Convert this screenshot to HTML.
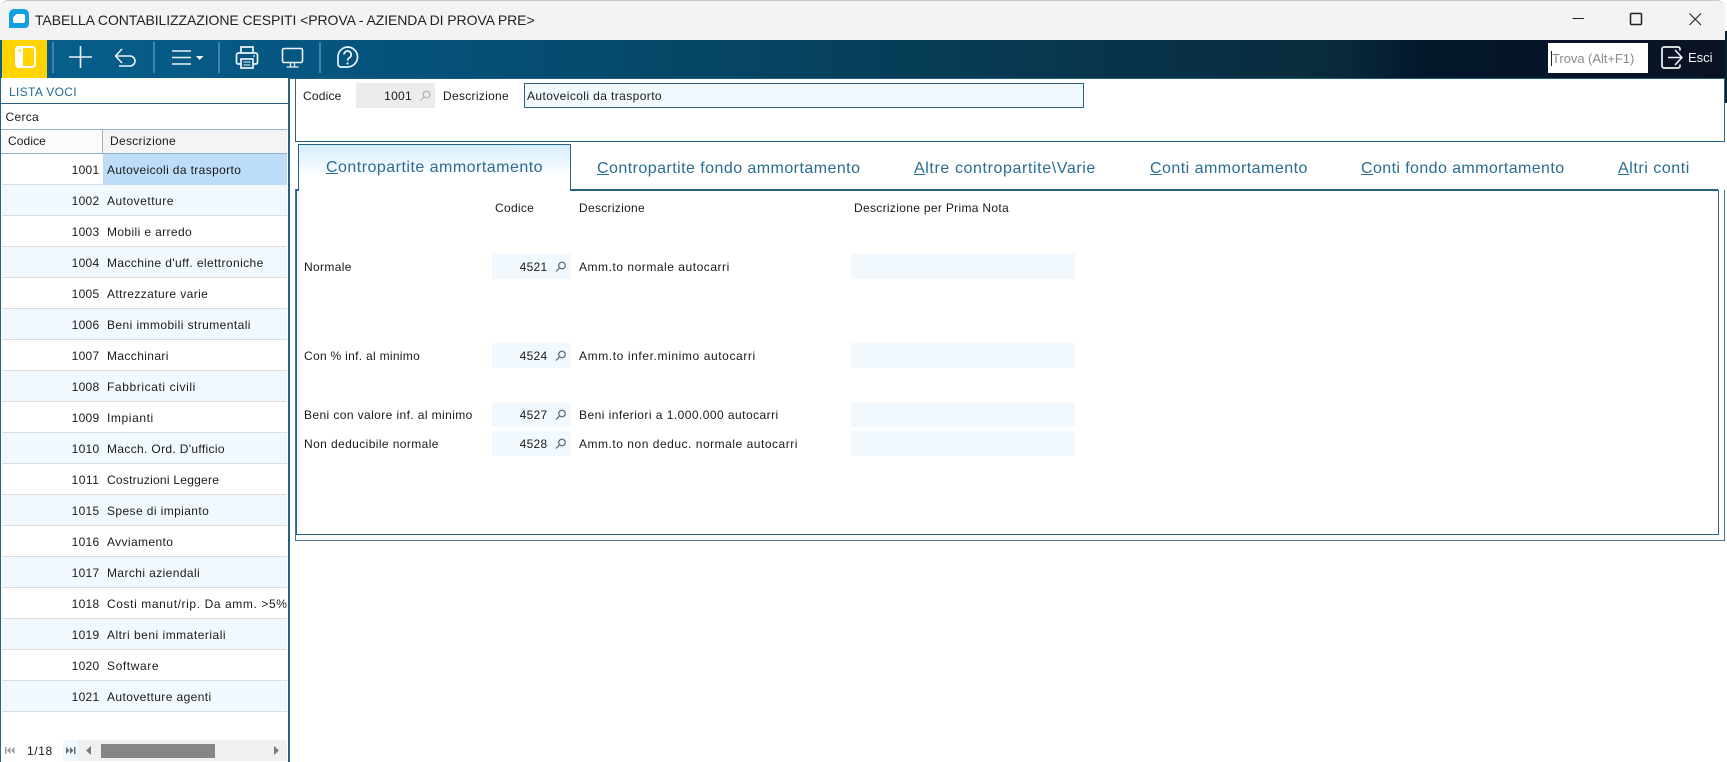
<!DOCTYPE html>
<html lang="it">
<head>
<meta charset="utf-8">
<title>TABELLA CONTABILIZZAZIONE CESPITI</title>
<style>
html,body{margin:0;padding:0;background:#fff;}
body{position:relative;width:1727px;height:762px;overflow:hidden;font-family:"Liberation Sans",sans-serif;font-size:12px;color:#1a1a1a;}
.a{position:absolute;}
.t{position:absolute;white-space:nowrap;line-height:14px;height:14px;letter-spacing:.3px;}
.r{text-align:right;}
.row{position:absolute;left:2px;width:285px;height:30px;border-bottom:1px solid #d9dfe3;}
.row.o{background:#f1f9fe;}
.row .n{position:absolute;left:0;width:97.5px;top:9px;text-align:right;line-height:14px;letter-spacing:.3px;}
.row .d{position:absolute;left:105px;top:9px;line-height:14px;letter-spacing:.4px;white-space:nowrap;}
.tab{position:absolute;white-space:nowrap;font-size:16px;line-height:20px;color:#2a6c92;height:20px;letter-spacing:.45px;}
.inp{position:absolute;background:#f1f9fe;height:25px;}
</style>
</head>
<body>
<!-- title bar -->
<div class="a" style="left:0;top:0;width:1725px;height:40px;background:#f3f3f3;border-top:1px solid #c8c8c8;border-radius:8px 8px 0 0;box-sizing:border-box;"></div>
<div class="t" style="left:35px;top:12px;font-size:14px;line-height:16px;height:16px;color:#222;letter-spacing:-.08px;">TABELLA CONTABILIZZAZIONE CESPITI &lt;PROVA - AZIENDA DI PROVA PRE&gt;</div>
<!-- toolbar -->
<div class="a" style="left:0;top:40px;width:1725px;height:38px;background:linear-gradient(90deg,#07608c 0,#05557f 340px,#063f5a 870px,#0a2a3c 1340px,#04182c 1420px,#0a1222 1725px);"></div>
<div class="a" style="left:290px;top:78px;width:1435px;height:1px;background:#1f6080;"></div>
<div class="a" style="left:2px;top:40px;width:45px;height:38px;background:#ffd400;"></div>
<div class="a" style="left:1548px;top:43px;width:100px;height:30px;background:#fff;"></div>
<div class="a" style="left:1551px;top:51px;width:1px;height:15px;background:#222;"></div>
<div class="t" style="left:1552px;top:52px;color:#8a8a8a;font-size:13px;letter-spacing:-.05px;">Trova (Alt+F1)</div>
<div class="t" style="left:1688px;top:50px;color:#f2f6f8;font-size:13px;line-height:16px;height:16px;letter-spacing:0;">Esci</div>
<!-- right edge -->
<div class="a" style="left:1725px;top:31px;width:2px;height:72px;background:#0c2233;"></div>
<!-- left panel -->
<div class="a" style="left:0;top:78px;width:1px;height:684px;background:#2a6080;"></div>
<div class="a" style="left:288px;top:78px;width:2px;height:684px;background:#2a6080;"></div>
<div class="t" style="left:9px;top:85px;color:#1f6a94;letter-spacing:.35px;">LISTA VOCI</div>
<div class="a" style="left:1px;top:103px;width:287px;height:1px;background:#2a6080;"></div>
<div class="t" style="left:5.500px;top:110px;">Cerca</div>
<div class="a" style="left:1px;top:129px;width:286px;height:25px;background:#f4f4f4;border-top:1px solid #9fb2bf;border-bottom:1px solid #8fb2cc;box-sizing:border-box;"></div>
<div class="a" style="left:1px;top:130px;width:101px;height:23px;background:#fbfbfb;"></div>
<div class="a" style="left:102px;top:130px;width:1px;height:23px;background:#9fb2bf;"></div>
<div class="t" style="left:8px;top:134px;letter-spacing:.1px;">Codice</div>
<div class="t" style="left:110px;top:134px;letter-spacing:.3px;">Descrizione</div>

<div class="row" style="top:154px;"><div class="a" style="left:101px;top:0;width:184px;height:31px;background:#bddcf8;"></div><span class="n">1001</span><span class="d" style="letter-spacing:.37px;">Autoveicoli da trasporto</span></div>
<div class="row o" style="top:185px;"><span class="n">1002</span><span class="d" style="letter-spacing:.5px;">Autovetture</span></div>
<div class="row" style="top:216px;"><span class="n">1003</span><span class="d" style="letter-spacing:.38px;">Mobili e arredo</span></div>
<div class="row o" style="top:247px;"><span class="n">1004</span><span class="d">Macchine d'uff. elettroniche</span></div>
<div class="row" style="top:278px;"><span class="n">1005</span><span class="d">Attrezzature varie</span></div>
<div class="row o" style="top:309px;"><span class="n">1006</span><span class="d" style="letter-spacing:.42px;">Beni immobili strumentali</span></div>
<div class="row" style="top:340px;"><span class="n">1007</span><span class="d" style="letter-spacing:.38px;">Macchinari</span></div>
<div class="row o" style="top:371px;"><span class="n">1008</span><span class="d" style="letter-spacing:.6px;">Fabbricati civili</span></div>
<div class="row" style="top:402px;"><span class="n">1009</span><span class="d" style="letter-spacing:.6px;">Impianti</span></div>
<div class="row o" style="top:433px;"><span class="n">1010</span><span class="d" style="letter-spacing:.34px;">Macch. Ord. D'ufficio</span></div>
<div class="row" style="top:464px;"><span class="n" style="letter-spacing:.55px;">1011</span><span class="d" style="letter-spacing:.25px;">Costruzioni Leggere</span></div>
<div class="row o" style="top:495px;"><span class="n">1015</span><span class="d">Spese di impianto</span></div>
<div class="row" style="top:526px;"><span class="n">1016</span><span class="d" style="letter-spacing:.38px;">Avviamento</span></div>
<div class="row o" style="top:557px;"><span class="n">1017</span><span class="d">Marchi aziendali</span></div>
<div class="row" style="top:588px;"><span class="n">1018</span><span class="d" style="letter-spacing:.6px;">Costi manut/rip. Da amm. &gt;5%</span></div>
<div class="row o" style="top:619px;"><span class="n">1019</span><span class="d" style="letter-spacing:.5px;">Altri beni immateriali</span></div>
<div class="row" style="top:650px;"><span class="n">1020</span><span class="d" style="letter-spacing:.6px;">Software</span></div>
<div class="row o" style="top:681px;"><span class="n">1021</span><span class="d">Autovetture agenti</span></div>

<!-- pager -->
<div class="a" style="left:63px;top:740px;width:15px;height:21px;background:#f1f9fe;"></div>
<div class="a" style="left:78px;top:740px;width:209px;height:21px;background:#f0f0f0;"></div>
<div class="a" style="left:101px;top:744px;width:114px;height:14px;background:#868686;"></div>
<div class="t" style="left:27px;top:744px;letter-spacing:.6px;">1/18</div>

<!-- top form -->
<div class="a" style="left:295px;top:78px;width:1430px;height:64px;border:1px solid #2a6080;border-top:0;box-sizing:border-box;"></div>
<div class="t" style="left:303px;top:89px;letter-spacing:.2px;">Codice</div>
<div class="a" style="left:356px;top:83px;width:79px;height:25px;background:#ececec;"></div>
<div class="t r" style="left:360px;width:52px;top:89px;">1001</div>
<div class="t" style="left:443px;top:89px;">Descrizione</div>
<div class="a" style="left:524px;top:83px;width:560px;height:25px;background:#f1f9fe;border:1px solid #2a6080;box-sizing:border-box;"></div>
<div class="t" style="left:527px;top:89px;letter-spacing:.4px;">Autoveicoli da trasporto</div>

<!-- tabs -->
<div class="a" style="left:295px;top:189px;width:1423px;height:2px;background:#2a6080;"></div>
<div class="a" style="left:298px;top:144px;width:273px;height:47px;background:linear-gradient(180deg,#d6edfb 0,#ffffff 70%);border:1px solid #2a6080;border-bottom:0;box-sizing:border-box;"></div>
<div class="tab" style="left:326px;top:158px;letter-spacing:.48px;"><u>C</u>ontropartite ammortamento</div>
<div class="tab" style="left:597px;top:159px;"><u>C</u>ontropartite fondo ammortamento</div>
<div class="tab" style="left:914px;top:159px;letter-spacing:.6px;"><u>A</u>ltre contropartite\Varie</div>
<div class="tab" style="left:1150px;top:159px;letter-spacing:.47px;"><u>C</u>onti ammortamento</div>
<div class="tab" style="left:1361px;top:159px;letter-spacing:.4px;"><u>C</u>onti fondo ammortamento</div>
<div class="tab" style="left:1618px;top:159px;letter-spacing:.55px;"><u>A</u>ltri conti</div>

<!-- content -->
<div class="a" style="left:296px;top:190px;width:1423px;height:345px;border:1px solid #2a6080;border-top:0;box-sizing:border-box;"></div>
<div class="a" style="left:295px;top:142px;width:1430px;height:399px;border:1px solid #4a7590;border-top:0;box-sizing:border-box;"></div>
<div class="a" style="left:295px;top:142px;width:1px;height:47px;background:#fff;"></div>
<div class="a" style="left:1724px;top:142px;width:1px;height:48px;background:#fff;"></div>

<div class="t" style="left:495px;top:201px;">Codice</div>
<div class="t" style="left:579px;top:201px;">Descrizione</div>
<div class="t" style="left:854px;top:201px;letter-spacing:.32px;">Descrizione per Prima Nota</div>

<div class="t" style="left:304px;top:260px;letter-spacing:.35px;">Normale</div>
<div class="inp" style="left:492px;top:254px;width:79px;"></div>
<div class="t r" style="left:500px;width:47.5px;top:260px;">4521</div>
<div class="t" style="left:579px;top:260px;letter-spacing:.53px;">Amm.to normale autocarri</div>
<div class="inp" style="left:851px;top:254px;width:224px;"></div>

<div class="t" style="left:304px;top:349px;">Con % inf. al minimo</div>
<div class="inp" style="left:492px;top:343px;width:79px;"></div>
<div class="t r" style="left:500px;width:47.5px;top:349px;">4524</div>
<div class="t" style="left:579px;top:349px;letter-spacing:.6px;">Amm.to infer.minimo autocarri</div>
<div class="inp" style="left:851px;top:343px;width:224px;"></div>

<div class="t" style="left:304px;top:408px;letter-spacing:.4px;">Beni con valore inf. al minimo</div>
<div class="inp" style="left:492px;top:402px;width:79px;"></div>
<div class="t r" style="left:500px;width:47.5px;top:408px;">4527</div>
<div class="t" style="left:579px;top:408px;letter-spacing:.45px;">Beni inferiori a 1.000.000 autocarri</div>
<div class="inp" style="left:851px;top:402px;width:224px;"></div>

<div class="t" style="left:304px;top:437px;letter-spacing:.4px;">Non deducibile normale</div>
<div class="inp" style="left:492px;top:431px;width:79px;"></div>
<div class="t r" style="left:500px;width:47.5px;top:437px;">4528</div>
<div class="t" style="left:579px;top:437px;letter-spacing:.52px;">Amm.to non deduc. normale autocarri</div>
<div class="inp" style="left:851px;top:431px;width:224px;"></div>

<!-- icons -->
<svg class="a" style="left:0;top:0;" width="1727" height="762" viewBox="0 0 1727 762" fill="none">
  <!-- logo -->
  <path d="M14 9H24a5 5 0 0 1 5 5V24a4 4 0 0 1-4 4H9V14a5 5 0 0 1 5-5Z" fill="#12a0e0"/>
  <path d="M16.500 14H23a2 2 0 0 1 2 2V21a2 2 0 0 1-2 2H15a2 2 0 0 1-2-2V17.500Z" fill="#fff"/>
  <!-- window controls -->
  <path d="M1572.5 18.5H1584" stroke="#222" stroke-width="1"/>
  <rect x="1630.500" y="13.500" width="11" height="11" rx="1" stroke="#222" stroke-width="1.500"/>
  <path d="M1689.5 13.5L1701 25M1701 13.5L1689.5 25" stroke="#222" stroke-width="1.1"/>
  <!-- separators -->
  <path d="M53 42V73M154 42V73M219 42V73M320 42V73" stroke="#6f9fb8" stroke-width="1.2"/>
  <!-- yellow panel icon -->
  <rect x="16" y="47" width="19" height="20" rx="3" stroke="#fff" stroke-width="2"/>
  <path d="M16 50a3 3 0 0 1 3-3h4v20h-4a3 3 0 0 1-3-3z" fill="#fff"/>
  <circle cx="19.5" cy="50.5" r="1.2" fill="#ffd400"/>
  <!-- plus -->
  <path d="M69 57H92M80.5 46V68" stroke="#eaf3f7" stroke-width="1.6"/>
  <!-- undo -->
  <path d="M122 49L115.500 56L122 63M116 56H130a5 5 0 0 1 0 10H119" stroke="#eaf3f7" stroke-width="1.6" stroke-linejoin="round"/>
  <!-- menu -->
  <path d="M172 51H191M172 57.500H191M172 64H191" stroke="#eaf3f7" stroke-width="1.6"/>
  <path d="M196 56H203.500L199.700 60Z" fill="#fff"/>
  <!-- printer -->
  <path d="M241 53V47H253V53" stroke="#eaf3f7" stroke-width="1.7"/>
  <path d="M241 64H238a1.500 1.500 0 0 1-1.500-1.500V55a2 2 0 0 1 2-2H255.500a2 2 0 0 1 2 2v7.500A1.500 1.500 0 0 1 256 64H253" stroke="#eaf3f7" stroke-width="1.7"/>
  <rect x="241" y="59" width="12" height="9" stroke="#eaf3f7" stroke-width="1.7"/>
  <path d="M243.500 62H250.500M243.500 65H250.500" stroke="#eaf3f7" stroke-width="1.100"/>
  <circle cx="254" cy="56" r=".9" fill="#eaf3f7"/>
  <!-- monitor -->
  <rect x="282.500" y="48.500" width="20" height="14" rx="1.500" stroke="#eaf3f7" stroke-width="1.600"/>
  <path d="M290.500 62.500V66.500M294.500 62.500V66.500M286.500 67H298.500" stroke="#eaf3f7" stroke-width="1.300"/>
  <!-- help -->
  <path d="M347.500 47a10 10 0 1 1 0 20H341a3 3 0 0 1-3-3V57A10 10 0 0 1 347.500 47Z" stroke="#eaf3f7" stroke-width="1.700"/>
  <path d="M344 54.500a3.600 3.600 0 1 1 5.500 3.200c-1.300.8-1.900 1.400-1.900 2.900" stroke="#eaf3f7" stroke-width="1.700"/>
  <circle cx="347.600" cy="63.500" r="1.100" fill="#eaf3f7"/>
  <!-- esci -->
  <path d="M1680 50.500V49a2 2 0 0 0-2-2H1664a2 2 0 0 0-2 2V66a2 2 0 0 0 2 2H1678a2 2 0 0 0 2-2V64.500" stroke="#f2f6f8" stroke-width="1.700"/>
  <path d="M1668 57.500H1681.500M1675 50L1682 57.500L1675 65" stroke="#f2f6f8" stroke-width="1.500"/>
  <!-- search icons -->
  <g stroke="#b0b0b0" stroke-width="1.200"><circle cx="426.500" cy="94.500" r="3.300"/><path d="M424 97L420.500 100.500"/></g>
  <g stroke="#5a6470" stroke-width="1.200"><circle cx="562" cy="265.500" r="3.300"/><path d="M559.500 268L556 271.500"/></g>
  <g stroke="#5a6470" stroke-width="1.200"><circle cx="562" cy="354.500" r="3.300"/><path d="M559.500 357L556 360.500"/></g>
  <g stroke="#5a6470" stroke-width="1.200"><circle cx="562" cy="413.500" r="3.300"/><path d="M559.500 416L556 419.500"/></g>
  <g stroke="#5a6470" stroke-width="1.200"><circle cx="562" cy="442.500" r="3.300"/><path d="M559.500 445L556 448.500"/></g>
  <!-- pager icons -->
  <g fill="#9a9a9a"><rect x="5" y="747" width="1.500" height="7"/><path d="M10.500 747V754L7 750.500ZM14.500 747V754L11 750.500Z"/></g>
  <g fill="#5f6f7c"><path d="M66 747V754L69.500 750.500ZM70 747V754L73.500 750.500Z"/><rect x="74" y="747" width="1.500" height="7"/></g>
  <path d="M91 746V755L86 750.500Z" fill="#7a7a7a"/>
  <path d="M274 746V755L279 750.500Z" fill="#7a7a7a"/>
</svg>
</body>
</html>
